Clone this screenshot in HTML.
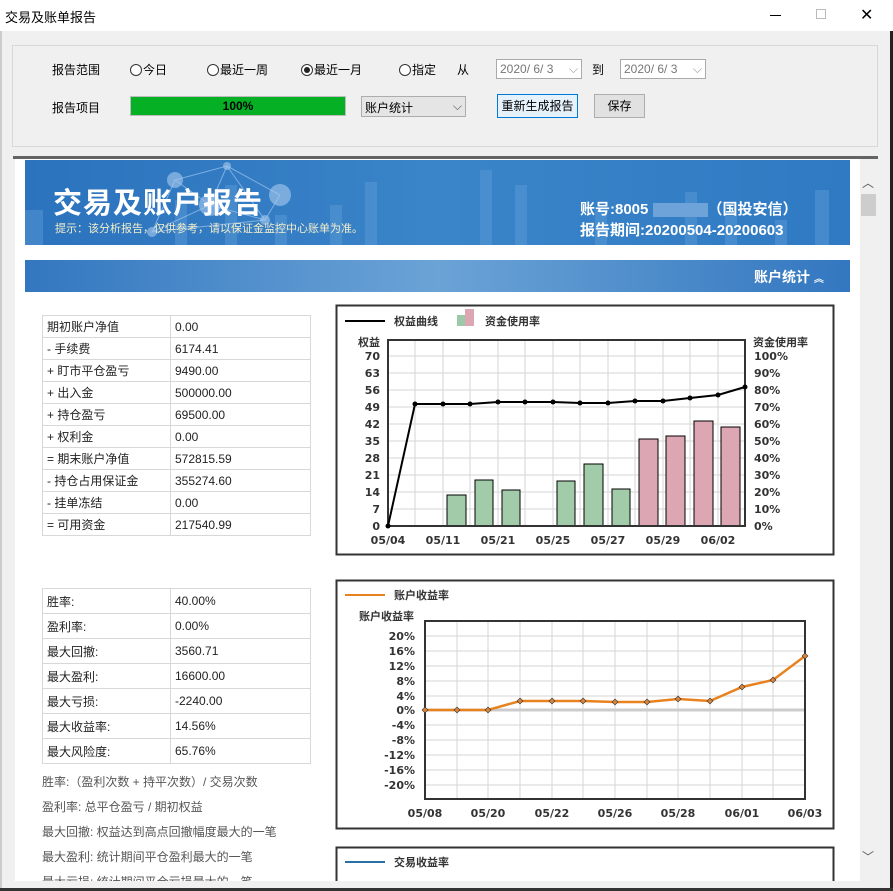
<!DOCTYPE html>
<html><head><meta charset="utf-8"><style>
*{margin:0;padding:0;box-sizing:border-box}
body{width:893px;height:891px;overflow:hidden;background:#f0f0f0;font-family:"Liberation Sans","Noto Sans CJK SC",sans-serif;font-size:12px;color:#000;position:relative}
.a{position:absolute}
.t1 td{height:22px;border:1px solid #d8d8d8;padding:0 4px;font-size:12px;color:#222}
.t2 td{height:25px;border:1px solid #d8d8d8;padding:0 4px;font-size:12px;color:#222}
table{border-collapse:collapse;position:absolute}
.note{position:absolute;left:42px;font-size:12px;color:#555}
.radio{display:inline-block;width:12px;height:12px;border:1px solid #333;border-radius:50%;vertical-align:-2px;margin-right:1px;background:#fff;position:relative}
.date{position:absolute;height:20px;border:1px solid #aaa;background:#fff;color:#777;font-size:12px;padding:2px 3px}
</style></head><body>
<div class="a" style="left:0;top:0;width:893px;height:31px;background:#fff"></div>
<div class="a" style="left:5px;top:7px;font-size:13px">交易及账单报告</div>
<div class="a" style="left:770px;top:15px;width:11px;height:1px;background:#000"></div>
<div class="a" style="left:816px;top:9px;width:10px;height:10px;border:1px solid #bbb"></div>
<div class="a" style="left:860px;top:5px;font-size:16px">✕</div>
<div class="a" style="left:890px;top:31px;width:3px;height:860px;background:#222"></div>
<div class="a" style="left:0;top:31px;width:2px;height:860px;background:#ccc"></div>

<div class="a" style="left:12px;top:45px;width:866px;height:102px;border:1px solid #d8d8d8"></div>
<div class="a" style="left:52px;top:61px">报告范围</div>
<div class="a" style="left:130px;top:61px"><span class="radio"></span>今日</div>
<div class="a" style="left:207px;top:61px"><span class="radio"></span>最近一周</div>
<div class="a" style="left:301px;top:61px"><span class="radio"><span class="a" style="left:2px;top:2px;width:6px;height:6px;border-radius:50%;background:#222"></span></span>最近一月</div>
<div class="a" style="left:399px;top:61px"><span class="radio"></span>指定</div>
<div class="a" style="left:457px;top:61px">从</div>
<div class="date" style="left:496px;top:59px;width:86px">2020/ 6/ 3 <span style="float:right;color:#999">⌵</span></div>
<div class="a" style="left:592px;top:61px">到</div>
<div class="date" style="left:620px;top:59px;width:86px">2020/ 6/ 3 <span style="float:right;color:#999">⌵</span></div>
<div class="a" style="left:52px;top:99px">报告项目</div>
<div class="a" style="left:130px;top:96px;width:216px;height:20px;background:#06b025;border:1px solid #bcbcbc;text-align:center;font-weight:bold;line-height:18px">100%</div>
<div class="a" style="left:361px;top:96px;width:105px;height:21px;background:#e5e5e5;border:1px solid #adadad;padding:2px 3px">账户统计<span style="float:right;color:#555">⌵</span></div>
<div class="a" style="left:497px;top:94px;width:81px;height:24px;background:#e5f1fb;border:1px solid #0078d7;text-align:center;line-height:22px">重新生成报告</div>
<div class="a" style="left:594px;top:94px;width:51px;height:24px;background:#e1e1e1;border:1px solid #adadad;text-align:center;line-height:22px">保存</div>

<div class="a" style="left:13px;top:156px;width:865px;height:3px;background:#646464"></div>
<div class="a" style="left:15px;top:159px;width:845px;height:722px;background:#fff"></div>
<div class="a" style="left:860px;top:159px;width:18px;height:722px;background:#f0f0f0"></div>
<div class="a" style="left:862px;top:174px;font-size:12px;color:#555">︿</div>
<div class="a" style="left:861px;top:194px;width:15px;height:22px;background:#cdcdcd"></div>
<div class="a" style="left:862px;top:848px;font-size:12px;color:#555">﹀</div>

<!-- banner -->
<div class="a" style="left:25px;top:160px;width:825px;height:85px;background:linear-gradient(90deg,#2b73bd,#3a84c9 50%,#2f7ac3);overflow:hidden">
<svg width="825" height="85" style="position:absolute;left:0;top:0">
<g fill="#5a9ad6" opacity=".5"><rect x="0" y="50" width="18" height="35"/><rect x="150" y="40" width="12" height="45"/><rect x="200" y="25" width="12" height="60"/><rect x="250" y="55" width="12" height="30"/><rect x="305" y="45" width="12" height="40"/><rect x="340" y="22" width="12" height="63"/><rect x="455" y="10" width="12" height="75"/><rect x="490" y="25" width="12" height="60"/><rect x="660" y="32" width="12" height="53"/><rect x="700" y="55" width="12" height="30"/><rect x="750" y="60" width="12" height="25"/><rect x="790" y="30" width="14" height="55"/><rect x="570" y="50" width="12" height="35"/></g>
<g stroke="#9cc6ee" stroke-width="1" opacity=".7" fill="none"><path d="M150 20 L202 6 L255 35 L202 6 L185 45 L150 20 L127 72 L185 45 L240 60 L202 6 L255 35 L240 60 L127 72"/></g>
<g fill="#a8cbee" opacity=".6"><circle cx="150" cy="20" r="8"/><circle cx="185" cy="45" r="11"/><circle cx="255" cy="35" r="11"/><circle cx="202" cy="6" r="4"/><circle cx="127" cy="72" r="5"/><circle cx="240" cy="60" r="5"/></g>
</svg>
<div class="a" style="left:28px;top:20px;font-size:29px;color:#fff;font-weight:bold;letter-spacing:1px">交易及账户报告</div>
<div class="a" style="left:30px;top:60px;font-size:11px;color:#f3eecb">提示：该分析报告，仅供参考，请以保证金监控中心账单为准。</div>
<div class="a" style="left:555px;top:38px;font-size:15px;color:#fff;font-weight:bold">账号:8005 <span style="display:inline-block;width:55px;height:14px;background:#6da3d8;vertical-align:middle"></span>（国投安信）</div>
<div class="a" style="left:555px;top:59px;font-size:15px;color:#fff;font-weight:bold">报告期间:20200504-20200603</div>
</div>
<div class="a" style="left:25px;top:260px;width:825px;height:32px;background:linear-gradient(90deg,#3377c0,#6ba3d6 50%,#3377c0)"></div>
<div class="a" style="left:754px;top:267px;font-size:14px;color:#fff;font-weight:bold">账户统计 <span style="font-size:10px">︽</span></div>

<table class="t1" style="left:42px;top:315px;width:269px">
<tr><td style="width:128px">期初账户净值</td><td>0.00</td></tr>
<tr><td>- 手续费</td><td>6174.41</td></tr>
<tr><td>+ 盯市平仓盈亏</td><td>9490.00</td></tr>
<tr><td>+ 出入金</td><td>500000.00</td></tr>
<tr><td>+ 持仓盈亏</td><td>69500.00</td></tr>
<tr><td>+ 权利金</td><td>0.00</td></tr>
<tr><td>= 期末账户净值</td><td>572815.59</td></tr>
<tr><td>- 持仓占用保证金</td><td>355274.60</td></tr>
<tr><td>- 挂单冻结</td><td>0.00</td></tr>
<tr><td>= 可用资金</td><td>217540.99</td></tr>
</table>
<table class="t2" style="left:42px;top:588px;width:269px">
<tr><td style="width:128px">胜率:</td><td>40.00%</td></tr>
<tr><td>盈利率:</td><td>0.00%</td></tr>
<tr><td>最大回撤:</td><td>3560.71</td></tr>
<tr><td>最大盈利:</td><td>16600.00</td></tr>
<tr><td>最大亏损:</td><td>-2240.00</td></tr>
<tr><td>最大收益率:</td><td>14.56%</td></tr>
<tr><td>最大风险度:</td><td>65.76%</td></tr>
</table>
<div class="note" style="top:773px">胜率:（盈利次数 + 持平次数）/ 交易次数</div>
<div class="note" style="top:798px">盈利率: 总平仓盈亏 / 期初权益</div>
<div class="note" style="top:823px">最大回撤: 权益达到高点回撤幅度最大的一笔</div>
<div class="note" style="top:848px">最大盈利: 统计期间平仓盈利最大的一笔</div>
<div class="note" style="top:873px">最大亏损: 统计期间平仓亏损最大的一笔</div>

<svg class="a" style="left:0;top:0" width="893" height="881" font-family="DejaVu Sans,Noto Sans CJK SC,sans-serif" font-size="11" font-weight="bold" fill="#333">
<rect x="336.5" y="305.5" width="497" height="249" fill="#fff" stroke="#333" stroke-width="2"/>
<line x1="345" y1="321" x2="385" y2="321" stroke="#000" stroke-width="2"/>
<text x="394" y="325">权益曲线</text>
<rect x="457" y="315" width="8" height="11" fill="#9dc9a8"/><rect x="465" y="309" width="9" height="17" fill="#dca7b3"/>
<text x="485" y="325">资金使用率</text>
<text x="358" y="346">权益</text><text x="753" y="346">资金使用率</text>
<g stroke="#d6d6d6" stroke-width="1">
<path d="M415 340V526M443 340V526M470 340V526M498 340V526M525 340V526M553 340V526M580 340V526M608 340V526M635 340V526M663 340V526M690 340V526M718 340V526"/>
<path d="M388 356H745M388 373H745M388 390H745M388 407H745M388 424H745M388 441H745M388 458H745M388 475H745M388 492H745M388 509H745"/>
</g>
<g stroke="#000" stroke-width="1" fill="#a2cbaa">
<rect x="447" y="495" width="19" height="31"/><rect x="475" y="480" width="18" height="46"/><rect x="502" y="490" width="18" height="36"/><rect x="557" y="481" width="18" height="45"/><rect x="584" y="464" width="19" height="62"/><rect x="612" y="489" width="18" height="37"/>
<g fill="#dca7b3"><rect x="639" y="439" width="19" height="87"/><rect x="666" y="436" width="19" height="90"/><rect x="694" y="421" width="19" height="105"/><rect x="721" y="427" width="19" height="99"/></g>
</g>
<rect x="388" y="340" width="357" height="186" fill="none" stroke="#333" stroke-width="2"/>
<polyline fill="none" stroke="#000" stroke-width="2" points="388,526 415,404 443,404 470,404 498,402 525,402 553,402 580,403 608,403 635,401 663,401 690,398 718,395 745,387"/>
<g fill="#000"><circle cx="388" cy="526" r="2.5"/><circle cx="415" cy="404" r="2.5"/><circle cx="443" cy="404" r="2.5"/><circle cx="470" cy="404" r="2.5"/><circle cx="498" cy="402" r="2.5"/><circle cx="525" cy="402" r="2.5"/><circle cx="553" cy="402" r="2.5"/><circle cx="580" cy="403" r="2.5"/><circle cx="608" cy="403" r="2.5"/><circle cx="635" cy="401" r="2.5"/><circle cx="663" cy="401" r="2.5"/><circle cx="690" cy="398" r="2.5"/><circle cx="718" cy="395" r="2.5"/><circle cx="745" cy="387" r="2.5"/></g>
<g text-anchor="end"><text x="380" y="360">70</text><text x="380" y="377">63</text><text x="380" y="394">56</text><text x="380" y="411">49</text><text x="380" y="428">42</text><text x="380" y="445">35</text><text x="380" y="462">28</text><text x="380" y="479">21</text><text x="380" y="496">14</text><text x="380" y="513">7</text><text x="380" y="530">0</text></g>
<g><text x="754" y="360">100%</text><text x="754" y="377">90%</text><text x="754" y="394">80%</text><text x="754" y="411">70%</text><text x="754" y="428">60%</text><text x="754" y="445">50%</text><text x="754" y="462">40%</text><text x="754" y="479">30%</text><text x="754" y="496">20%</text><text x="754" y="513">10%</text><text x="754" y="530">0%</text></g>
<g text-anchor="middle"><text x="388" y="544">05/04</text><text x="443" y="544">05/11</text><text x="498" y="544">05/21</text><text x="553" y="544">05/25</text><text x="608" y="544">05/27</text><text x="663" y="544">05/29</text><text x="718" y="544">06/02</text></g>

<rect x="336.5" y="580.5" width="497" height="248" fill="#fff" stroke="#333" stroke-width="2"/>
<line x1="345" y1="595" x2="385" y2="595" stroke="#e8821e" stroke-width="2"/>
<text x="394" y="599">账户收益率</text>
<text x="359" y="620">账户收益率</text>
<g stroke="#d6d6d6" stroke-width="1">
<path d="M457 621V799M488 621V799M520 621V799M552 621V799M583 621V799M615 621V799M647 621V799M678 621V799M710 621V799M742 621V799M773 621V799"/>
<path d="M425 636H805M425 651H805M425 666H805M425 681H805M425 696H805M425 725H805M425 740H805M425 755H805M425 770H805M425 785H805"/>
</g>
<line x1="425" y1="710" x2="805" y2="710" stroke="#ccc" stroke-width="3"/>
<rect x="425" y="621" width="380" height="178" fill="none" stroke="#333" stroke-width="2"/>
<polyline fill="none" stroke="#e8821e" stroke-width="2.5" points="425,710 457,710 488,710 520,701 552,701 583,701 615,702 647,702 678,699 710,701 742,687 773,680 805,656"/>
<g fill="#d9823a" stroke="#333" stroke-width=".6"><path d="M425 707l3 3-3 3-3-3z"/><path d="M457 707l3 3-3 3-3-3z"/><path d="M488 707l3 3-3 3-3-3z"/><path d="M520 698l3 3-3 3-3-3z"/><path d="M552 698l3 3-3 3-3-3z"/><path d="M583 698l3 3-3 3-3-3z"/><path d="M615 699l3 3-3 3-3-3z"/><path d="M647 699l3 3-3 3-3-3z"/><path d="M678 696l3 3-3 3-3-3z"/><path d="M710 698l3 3-3 3-3-3z"/><path d="M742 684l3 3-3 3-3-3z"/><path d="M773 677l3 3-3 3-3-3z"/><path d="M805 653l3 3-3 3-3-3z"/></g>
<g text-anchor="end"><text x="415" y="640">20%</text><text x="415" y="655">16%</text><text x="415" y="670">12%</text><text x="415" y="685">8%</text><text x="415" y="700">4%</text><text x="415" y="714">0%</text><text x="415" y="729">-4%</text><text x="415" y="744">-8%</text><text x="415" y="759">-12%</text><text x="415" y="774">-16%</text><text x="415" y="789">-20%</text></g>
<g text-anchor="middle"><text x="425" y="817">05/08</text><text x="488" y="817">05/20</text><text x="552" y="817">05/22</text><text x="615" y="817">05/26</text><text x="678" y="817">05/28</text><text x="742" y="817">06/01</text><text x="805" y="817">06/03</text></g>

<rect x="336.5" y="847.5" width="497" height="60" fill="#fff" stroke="#333" stroke-width="2"/>
<line x1="345" y1="862" x2="385" y2="862" stroke="#2c6ea6" stroke-width="2"/>
<text x="394" y="866">交易收益率</text>
</svg>
<div class="a" style="left:13px;top:881px;width:877px;height:7px;background:#f0f0f0"></div>
<div class="a" style="left:0;top:888px;width:893px;height:3px;background:#333"></div>
</body></html>
